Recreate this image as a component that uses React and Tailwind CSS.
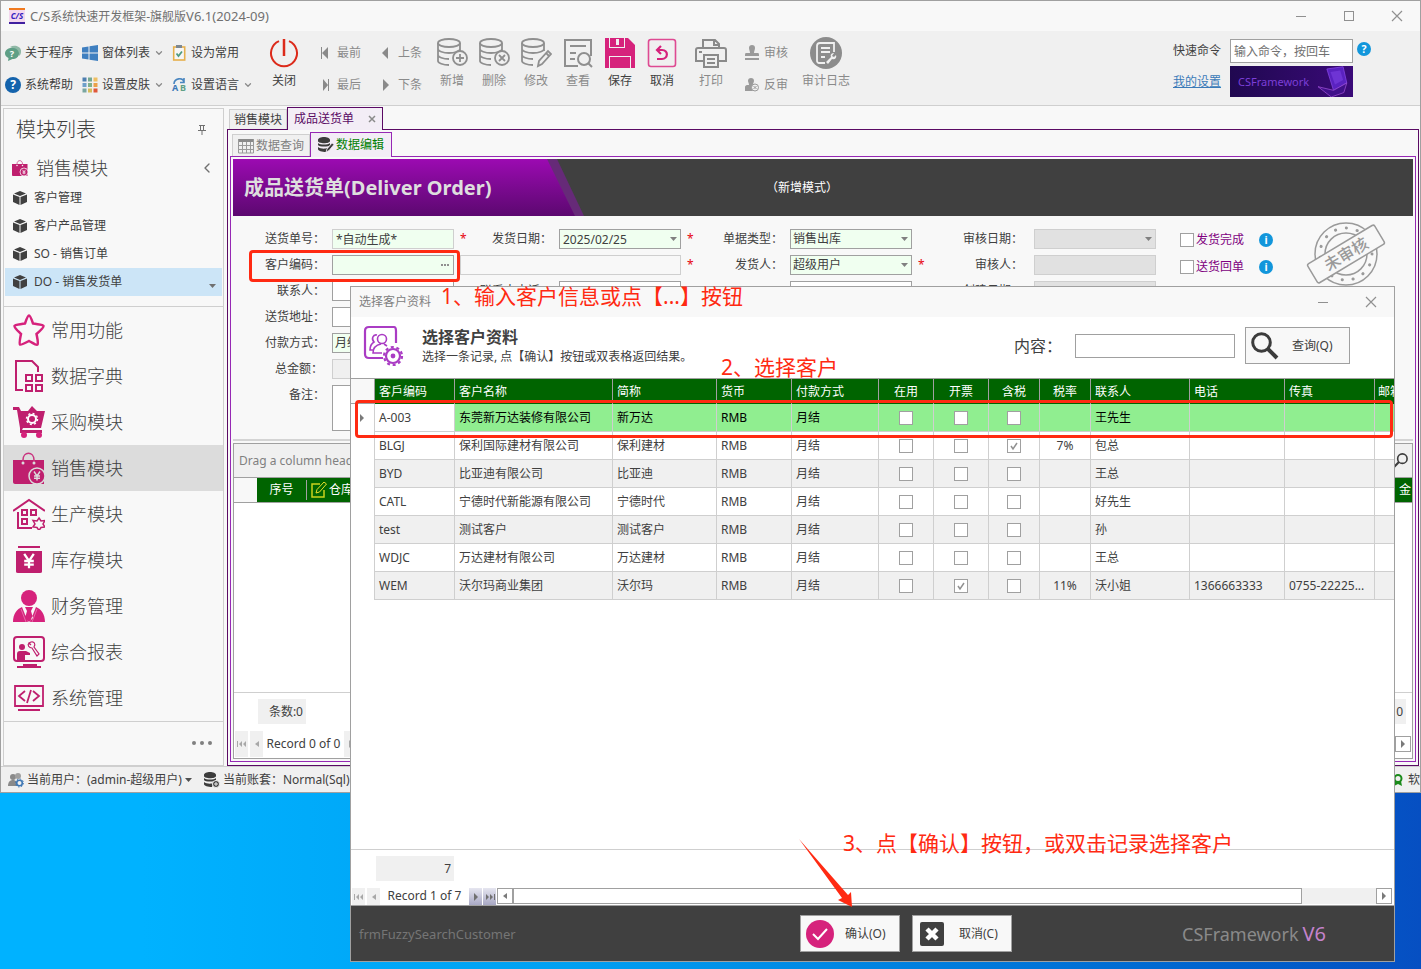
import React, { useState } from 'react';
import { ChevronDown, ChevronLeft } from 'lucide-react';

const NAV_ITEMS = ['常用功能', '数据字典', '采购模块', '销售模块', '生产模块', '库存模块', '财务管理', '综合报表', '系统管理'];

const CUSTOMERS = [
  { code: 'A-003', name: '东莞新万达装修有限公司', short: '新万达', flags: [false, false, false], rate: '', contact: '王先生', tel: '', fax: '' },
  { code: 'BLGJ', name: '保利国际建材有限公司', short: '保利建材', flags: [false, false, true], rate: '7%', contact: '包总', tel: '', fax: '' },
  { code: 'BYD', name: '比亚迪有限公司', short: '比亚迪', flags: [false, false, false], rate: '', contact: '王总', tel: '', fax: '' },
  { code: 'CATL', name: '宁德时代新能源有限公司', short: '宁德时代', flags: [false, false, false], rate: '', contact: '好先生', tel: '', fax: '' },
  { code: 'test', name: '测试客户', short: '测试客户', flags: [false, false, false], rate: '', contact: '孙', tel: '', fax: '' },
  { code: 'WDJC', name: '万达建材有限公司', short: '万达建材', flags: [false, false, false], rate: '', contact: '王总', tel: '', fax: '' },
  { code: 'WEM', name: '沃尔玛商业集团', short: '沃尔玛', flags: [false, true, false], rate: '11%', contact: '沃小姐', tel: '1366663333', fax: '0755-22225...' },
];

const FLAG_NAMES = ['在用', '开票', '含税'];

/* ---------- icons ---------- */

const Svg = ({ size = 16, box = 32, className = '', children }) => (
  <svg width={size} height={size} viewBox={`0 0 ${box} ${box}`} fill="none" className={`shrink-0 ${className}`} aria-hidden="true">
    {children}
  </svg>
);

const Caret = ({ className = 'text-[#808080]' }) => (
  <svg width="7" height="4" viewBox="0 0 7 4" className={`shrink-0 ${className}`} aria-hidden="true">
    <path d="M0 0h7L3.500 4z" fill="currentColor" />
  </svg>
);

const Arrow = ({ kind, className = 'text-[#7a7a7a]' }) => (
  <svg width="10" height="10" viewBox="0 0 10 10" fill="currentColor" className={`shrink-0 ${className}`} aria-hidden="true">
    {kind === 'first' && <path d="M0 2h1v6H0zM5 2v6L2 5zM9 2v6L6 5z" />}
    {kind === 'prev' && <path d="M7 2v6L3 5z" />}
    {kind === 'next' && <path d="M3 1v8l4-4z" />}
    {kind === 'last' && <path d="M9 2h1v6H9zM5 2v6l3-3zM1 2v6l3-3z" />}
  </svg>
);

const StepIcon = ({ kind }) => (
  <Svg box={16} className="text-[#8a8a8a]">
    {kind === 'first' && <path fill="currentColor" d="M4 2h1v12H4zM11 2v12L5 8z" />}
    {kind === 'last' && <path fill="currentColor" d="M11 2h1v12h-1zM6 2v12l5-6z" />}
    {kind === 'prev' && <path fill="currentColor" d="M10 2v12L4 8z" />}
    {kind === 'next' && <path fill="currentColor" d="M5 2v12l6-6z" />}
  </Svg>
);

const ChatHelp = () => (
  <Svg box={16}>
    <path d="M5 2C10-1 17 2 16 7c0 2-1 3-2 4l-1-5z" fill="#8fb8a6" />
    <path d="M7 3c4 0 7 2 7 5.500S11 14 7.500 14L3 16l.5-3C1 12 0 10 0 8.500 0 5 3 3 7 3z" fill="#5f9f86" />
    <text x="7" y="12" textAnchor="middle" fontSize="9" fontWeight="700" fill="#fff">?</text>
  </Svg>
);

const HelpDot = ({ size = 16, color = '#1463ac', mark = '?' }) => (
  <Svg box={16} size={size}>
    <circle cx="8" cy="8" r="8" fill={color} />
    <text x="8" y="12" textAnchor="middle" fontSize="12" fontWeight="700" fill="#fff">{mark}</text>
  </Svg>
);

const WindowsIcon = () => (
  <Svg box={16}>
    <path fill="#3f7fc0" d="M0 2.500 6.500 1.500V7.500H0zM7.500 1.300 16 0v7.500H7.500zM0 8.500h6.500v6L0 13.500zM7.500 8.500H16V16l-8.500-1.300z" />
  </Svg>
);

const SkinIcon = () => (
  <Svg box={16}>
    {['#4e7fb0', '#74a892', '#efbf63', '#6f9fc9', '#7fb08c', '#eba24a', '#7aa6a0', '#d8bd5a', '#e0583a'].map((c, i) => (
      <rect key={c} x={(i % 3) * 5.5 + 0.5} y={Math.floor(i / 3) * 5.5 + 0.5} width="4" height="4" fill={c} />
    ))}
  </Svg>
);

const ClipIcon = () => (
  <Svg box={16}>
    <rect x="2.700" y="2" width="11" height="13" fill="#f6f6f6" stroke="#e6b04c" strokeWidth="1.600" />
    <path d="M5 0h6v3H5z" fill="#7d8790" />
    <path d="M5.500 8.500 7.500 11 11 6.500" stroke="#4f9a80" strokeWidth="1.800" />
  </Svg>
);

const LanguageIcon = () => (
  <Svg box={16} className="overflow-visible">
    <path d="M3 7c0-6 9-7 10-2M13 1v4.500H9" stroke="#4a86c0" strokeWidth="1.600" />
    <text x="4" y="14" textAnchor="middle" fontSize="9" fontWeight="700" fill="#3a78b8">A</text>
    <text x="12" y="14" textAnchor="middle" fontSize="9" fontWeight="700" fill="#5f9f86">B</text>
  </Svg>
);

const PowerIcon = () => (
  <Svg size={32} box={32}>
    <path d="M11 4.200A13 13 0 1 0 21 4.200" stroke="#dc2a1a" strokeWidth="2" />
    <path d="M16 2v17" stroke="#dc2a1a" strokeWidth="2.500" />
  </Svg>
);

const DbIcon = ({ kind }) => (
  <Svg size={32} box={32} className="text-[#8f8f8f]">
    <g stroke="currentColor" strokeWidth="1.800">
      <ellipse cx="13" cy="6" rx="11" ry="4" />
      <path d="M2 6v18c0 2 5 4 11 4M24 6v8M2 12c0 2 5 4 11 4s11-2 11-4M2 18c0 2 5 4 11 4" />
      {kind !== 'edit' && <circle cx="24" cy="21" r="7" fill="#f0f0f0" />}
      {kind === 'add' && <path d="M24 17v8M20 21h8" />}
      {kind === 'remove' && <path d="m21 18 6 6M27 18l-6 6" />}
      {kind === 'edit' && <path fill="#f0f0f0" d="m18 29 1-5 9-10 3 3-9 10zM26 16l3 3" />}
    </g>
  </Svg>
);

const ViewIcon = () => (
  <Svg size={32} box={32}>
    <g stroke="#8f8f8f" strokeWidth="2">
      <path d="M16 29H3V3h26v16M8 9h16M8 16h6M8 22h5" />
      <circle cx="22" cy="22" r="6" />
      <path d="m26 26 4 4" />
    </g>
  </Svg>
);

const SaveIcon = () => (
  <Svg size={32} box={32}>
    <path fill="#d6227c" d="M1 1h23l7 7v23H1z" />
    <path fill="#f0f0f0" d="M5 1h1v9h14V1h1v10H5zM12 2h3v6h-3zM5 19h22v12h-1V20H6v11H5z" />
  </Svg>
);

const UndoIcon = () => (
  <Svg size={32} box={32}>
    <rect x="2.500" y="2.500" width="27" height="27" rx="2.500" stroke="#de4a92" strokeWidth="1.600" />
    <path d="m15 9-4 4 4 4M11 13h5c7 0 6 9 0 9h-5" stroke="#d6227c" strokeWidth="2.200" />
  </Svg>
);

const PrintIcon = () => (
  <Svg size={32} box={32}>
    <g stroke="#8a8a8a" strokeWidth="2">
      <path d="M8 24H1V13c0-1 1-2 2-2h26c1 0 2 1 2 2v11h-7M8 11V3h12l4 4v4M19 3v5h5M9 18h14v12H9zM12 22h8M12 26h8" />
      <path d="M4 15h3" />
    </g>
  </Svg>
);

const StampIcon = ({ reverse }) => (
  <Svg box={16}>
    {!reverse && (
      <path fill="#9a9a9a" d="M8 0a3 3 0 0 1 3 3c0 2-1 3-1 5h4c1 0 1 1 1 3H1c0-2 0-3 1-3h4c0-2-1-3-1-5a3 3 0 0 1 3-3zM1 13h14v2H1z" />
    )}
    {reverse && (
      <>
        <path fill="#9a9a9a" d="M7 1a3 3 0 0 1 3 3c0 1-1 2-1 4h3v6H1v-4c0-1 1-2 2-2h2c0-2-1-3-1-4a3 3 0 0 1 3-3z" />
        <circle cx="11" cy="10.500" r="3.500" fill="#f0f0f0" stroke="#9a9a9a" />
        <path d="m9.500 9 3 3m0-3-3 3" stroke="#9a9a9a" />
      </>
    )}
  </Svg>
);

const AuditLogIcon = () => (
  <Svg size={32} box={32}>
    <circle cx="16" cy="16" r="16" fill="#8c8c8c" />
    <path d="M15 26H9c-1 0-2-1-2-2V9c0-2 1-3 3-3h14v9M11 11h9M11 15h9M11 20h4" stroke="#f0f0f0" strokeWidth="1.800" />
    <path d="m16 25 5-5c-1-3 1-4 3-4l-2 3 2 1 2-2c1 3-1 5-4 4l-4 5z" fill="#f0f0f0" />
  </Svg>
);

const CubeIcon = () => (
  <Svg size={14} box={14}>
    <path fill="#404040" d="M7 0l6 2.500L7 5 1 2.500zM0 3.500 6.500 6v8L0 11zM14 3.500 7.500 6v8l6.500-3z" />
  </Svg>
);

const PinIcon = () => (
  <Svg size={10} box={10}>
    <path d="M2 .5h6M3.500 1v4M6.500 1v4M1 5.500h8M5 6v4" stroke="#707070" />
  </Svg>
);

const Yen = ({ x, y, s = 1, color = '#fff' }) => (
  <path transform={`translate(${x} ${y}) scale(${s})`} d="m-4-6 4 6 4-6M0 0v6M-4 0h8M-4 3h8" stroke={color} strokeWidth="1.900" />
);

const BagIcon = ({ size = 32, halo }) => (
  <Svg size={size} box={32}>
    <path fill="#bf1f6e" d="M0 8h31v24H2c-1 0-2-1-2-2z" />
    <path d="M10 11V8c0-9 11-9 11 0v3" stroke="#c9347f" strokeWidth="1.500" />
    <circle cx="10" cy="11" r="1.500" fill={halo} />
    <circle cx="21" cy="11" r="1.500" fill={halo} />
    <circle cx="24" cy="24" r="8" fill="#bf1f6e" stroke={halo} strokeWidth="1.500" />
    <Yen x={24} y={24} s={0.75} color={halo} />
  </Svg>
);

const NavIcon = ({ index }) => {
  if (index === 3) return <BagIcon halo="#dcdcdc" />;
  return (
    <Svg size={32} box={32}>
      {index === 0 && (
        <path d="M16 1.500c1 0 2 2 4 8 5 1 10 1 10.500 2.500S27 17 23.500 20c1 5 2 9 1 10.500S20 29 16 27c-4 2-8 4.500-9 3.500s0-5.500 1-10.500C5 17 1 13.500 1.500 12S7 10.500 12 9.500c2-6 3-8 4-8z" stroke="#d6227c" strokeWidth="2.500" />
      )}
      {index === 1 && (
        <g stroke="#bf1f6e" strokeWidth="2">
          <path d="M10 30H3V1h16l6 6v5" />
          <path d="M13 15h6v6h-6zM23 15h6v6h-6zM13 25h6v6h-6zM23 25h6v6h-6z" />
        </g>
      )}
      {index === 2 && (
        <>
          <path fill="#bf1f6e" d="M0 1h6l2 4h7l4-5 5 5h8l-4 17H10l-1 2h20v3H7V22L4 4H0z" />
          <circle cx="11" cy="29" r="3" fill="#d6227c" />
          <circle cx="26" cy="29" r="3" fill="#d6227c" />
          <circle cx="19" cy="13" r="4" stroke="#fff" strokeWidth="2" />
          <circle cx="19" cy="13" r="5.500" stroke="#fff" strokeWidth="1.500" strokeDasharray="2 2.300" />
        </>
      )}
      {index === 4 && (
        <g stroke="#bf1f6e" strokeWidth="2">
          <path d="M0 13 16 2l16 11M5 14v16h14" />
          <path d="M9 12h5v5H9zM18 12h5v5h-5zM9 21h5v5H9z" />
          <path d="m26 20 2 3 4-.5-2 3.500 2 3-4 .5-2 3-2-3-4-.5 2-3-2-3.500 4 .5z" strokeWidth="1.500" />
        </g>
      )}
      {index === 5 && (
        <>
          <path fill="#bf1f6e" d="M5 2h22v2H5zM3 7h26v20c0 1 0 2-2 2H5c-2 0-2-1-2-2z" />
          <Yen x={16} y={17} s={1.2} />
        </>
      )}
      {index === 6 && (
        <>
          <circle cx="16" cy="8" r="8" fill="#d6227c" />
          <path fill="#d6227c" d="M0 32c0-8 4-13 9-15l6 15zM32 32c0-8-4-13-9-15l-6 15zM12 17h8l-2 4 2 7-4 4-4-4 2-7z" />
          <path d="m8 19 5 13M24 19l-5 13" stroke="#eda0c8" strokeWidth=".6" />
        </>
      )}
      {index === 7 && (
        <>
          <rect x="1" y="1" width="30" height="24" rx="3" stroke="#bf1f6e" strokeWidth="2" />
          <path fill="#bf1f6e" d="M10 28h14v2h4v2H4v-2h6z" />
          <circle cx="9" cy="11" r="3" fill="#bf1f6e" />
          <path fill="#bf1f6e" d="M4 24v-6c0-2 1-3 3-3h6l4 2v2h-5v5z" />
          <path d="m16 7 2-1c3-1 5 2 3 5l5 7-2 2-5-8c-3 0-5-3-3-5l2 2z" stroke="#bf1f6e" strokeWidth="1.200" />
        </>
      )}
      {index === 8 && (
        <g stroke="#bf1f6e" strokeWidth="1.800">
          <path d="M2 4h28v20H2z" />
          <path d="m12 9-6 5 6 5M20 9l6 5-6 5M18 8l-4 13M5 28h22" />
        </g>
      )}
    </Svg>
  );
};

const UserGearIcon = () => (
  <Svg box={16}>
    <circle cx="5" cy="5" r="3" fill="#8a8a8a" />
    <circle cx="10" cy="4" r="3" fill="#a0a0a0" />
    <path d="M0 14c0-4 2-6 5-6s4 2 4 6z" fill="#8a8a8a" />
    <circle cx="11.500" cy="11" r="2.800" fill="#f0f0f0" stroke="#3f78b5" strokeWidth="1.600" />
    <circle cx="11.500" cy="11" r="4" stroke="#3f78b5" strokeDasharray="1.500 1.600" />
  </Svg>
);

const DbSolidIcon = ({ mark }) => (
  <Svg box={16}>
    <path fill="#3c3c3c" d="M0 3c0-4 12-4 12 0v1c0 3-12 3-12 0zM0 6c2 2 10 2 12 0v2c-1 2-11 2-12 0zM0 10c2 2 8 2 9 1l-1 4c-4 0-8-1-8-3z" />
    {mark === 'add' && <circle cx="12" cy="12" r="3.500" fill="#3c3c3c" stroke="#f0f0f0" />}
    {mark === 'add' && <path d="M12 10v4M10 12h4" stroke="#f0f0f0" />}
    {mark === 'edit' && <path d="m8 15 1-3 5-6 2 1.500-5 6z" fill="#3c3c3c" stroke="#f3edf6" strokeWidth=".7" />}
  </Svg>
);

const GridIcon = () => (
  <Svg box={16}>
    <path d="M0 1h16v3H0z" fill="#8a8a8a" />
    <path d="M.5 1v14h15V1M.5 7.500h15M.5 11.500h15M4.500 4v11M8.500 4v11M12.500 4v11" stroke="#9a9a9a" />
  </Svg>
);

const EditIcon = () => (
  <Svg box={16}>
    <path d="M9 2H1v13h12V8" stroke="#c9d21c" strokeWidth="1.500" />
    <path d="m5 11 1-3.500L13 0l2.500 2L8.500 10z" stroke="#e6e02a" />
  </Svg>
);

const SearchIcon = ({ size = 28, className = '' }) => (
  <Svg size={size} box={28} className={className}>
    <circle cx="10.500" cy="10.500" r="8.800" stroke="#3c3c3c" strokeWidth="3" />
    <path d="m17 17 9 9" stroke="#3c3c3c" strokeWidth="4" />
  </Svg>
);

const CustomerIcon = () => (
  <Svg size={42} box={42}>
    <g stroke="#aa3cc4" strokeWidth="2.200">
      <path d="M20 33H6c-3 0-4-2-4-4V6c0-3 2-4 4-4h25c2 0 2 2 2 4v12" />
      <circle cx="19" cy="14" r="4.500" strokeWidth="1.600" />
      <path d="M14 10c-4-1-6 4-3 7-3 2-4 5-4 8h4M18 19c-5 1-8 4-8 9h9M21 19l3 2" strokeWidth="1.600" />
      <circle cx="30" cy="31" r="7" />
      <circle cx="30" cy="31" r="9" strokeDasharray="3 2.700" />
    </g>
    <circle cx="30" cy="31" r="2.400" fill="#aa3cc4" />
  </Svg>
);

const AuditStamp = () => (
  <svg width="82" height="66" viewBox="0 0 82 66" fill="none" className="shrink-0" aria-label="未审核">
    <g stroke="#9a9a9a">
      <circle cx="41" cy="33" r="31" strokeWidth="1.500" />
      <circle cx="41" cy="33" r="21" strokeWidth="1.500" />
      <circle cx="41" cy="33" r="26" strokeWidth="3" strokeDasharray="0.100 11" strokeLinecap="round" />
    </g>
    <g transform="rotate(-31 41 33)">
      <rect x="2" y="22" width="78" height="22" rx="2" fill="#f8f8f8" stroke="#9a9a9a" strokeWidth="1.500" />
      <text x="41" y="39" textAnchor="middle" fontSize="16" fontWeight="500" fill="#9a9a9a">未审核</text>
    </g>
  </svg>
);

/* ---------- shared controls ---------- */

const ToolButton = ({ icon, label, muted, menu, className = '' }) => (
  <button className={`flex h-8 items-center gap-1 whitespace-nowrap ${muted ? 'text-[#8a8a8a]' : 'text-[#404040]'} ${className}`}>
    {icon}
    <span>{label}</span>
    {menu && <ChevronDown size={10} strokeWidth={3} className="text-[#8a8a8a]" />}
  </button>
);

const BigButton = ({ icon, label, muted, className = 'w-[42px]' }) => (
  <button className={`flex flex-col items-center ${muted ? 'text-[#8a8a8a]' : 'text-[#404040]'} ${className}`}>
    {icon}
    <span className="h-6 whitespace-nowrap leading-6">{label}</span>
  </button>
);

const Checkbox = ({ id, label, defaultChecked = false }) => {
  const [checked, setChecked] = useState(defaultChecked);
  return (
    <span className="relative inline-flex">
      <input
        id={id}
        type="checkbox"
        aria-label={label}
        checked={checked}
        onChange={() => setChecked(!checked)}
        className="size-[14px] appearance-none border border-[#a0a0a0] bg-white"
      />
      {checked && (
        <svg width="14" height="14" viewBox="0 0 14 14" fill="none" className="pointer-events-none absolute inset-0" aria-hidden="true">
          <path d="m4 7 2 3 4-6" stroke="#909090" strokeWidth="1.500" />
        </svg>
      )}
    </span>
  );
};

const Label = ({ htmlFor, children, required, className = 'pr-[7px]' }) => (
  <div className={`flex items-center justify-between pl-[6px] ${className}`}>
    <span className="text-red-600">{required ? '*' : ''}</span>
    <label htmlFor={htmlFor} className="whitespace-nowrap">{children}</label>
  </div>
);

const Field = ({ id, value = '', tone = 'border-[#a0a0a0] bg-white', className = '' }) => (
  <input id={id} defaultValue={value} className={`h-5 w-full min-w-0 border px-[3px] outline-none ${tone} ${className}`} />
);

const Picker = ({ id, value, tone = 'border-[#a0a0a0] bg-[#f0fff0]' }) => (
  <div className="relative">
    <select id={id} className={`block h-5 w-full appearance-none border px-[2px] outline-none ${tone}`}>
      <option>{value}</option>
    </select>
    <Caret className="pointer-events-none absolute top-2 right-1 text-[#808080]" />
  </div>
);

const NavButton = ({ kind, label, active, className = 'h-[17px]' }) => (
  <button
    aria-label={label}
    className={`flex w-[13px] items-center justify-center ${className} ${active ? 'bg-linear-to-b from-[#e6e6f0] to-[#a8a8c4]' : 'bg-[#f0f0f0]'}`}
  >
    <Arrow kind={kind} className={active ? 'text-[#707070]' : 'text-[#a8a8a8]'} />
  </button>
);

/* ---------- main window ---------- */

const WindowButtons = ({ maximize }) => (
  <div className="ml-auto flex items-center gap-[34px]">
    <button aria-label="最小化" className="px-[2px] py-1"><span className="block h-px w-[10px] bg-[#909090]" /></button>
    {maximize && <button aria-label="最大化" className="px-[2px]"><span className="block size-[10px] border border-[#909090]" /></button>}
    <button aria-label="关闭窗口" className="px-px">
      <Svg size={12} box={12}><path d="m1 1 10 10M11 1 1 11" stroke="#909090" strokeWidth="1.200" /></Svg>
    </button>
  </div>
);

const TitleBar = () => (
  <header className="flex h-[31px] shrink-0 items-center border-t border-[#a0a0a0] bg-[#f8f8f8] pr-4 pl-2 text-[#707070]">
    <span className="flex size-4 items-center justify-center border-y-2 border-t-[#f07a20] border-b-[#4020a0] bg-[#f3d8ee] text-[8px] font-bold text-[#3020c0] italic">C/S</span>
    <h1 className="ml-[5px] whitespace-nowrap">
      <span className="text-[13px]">C/S</span>系统快速开发框架-旗舰版<span className="text-[13px]">V6.1(2024-09)</span>
    </h1>
    <WindowButtons maximize />
  </header>
);

const Toolbar = () => (
  <div className="flex h-[75px] shrink-0 items-start border-b border-[#cfcfcf] bg-[#f0f0f0] pt-[6px] pl-1">
    <div className="w-[77px] shrink-0">
      <ToolButton icon={<ChatHelp />} label="关于程序" />
      <ToolButton icon={<HelpDot />} label="系统帮助" />
    </div>
    <div className="w-[89px] shrink-0">
      <ToolButton icon={<WindowsIcon />} label="窗体列表" menu />
      <ToolButton icon={<SkinIcon />} label="设置皮肤" menu />
    </div>
    <div className="w-[95px] shrink-0">
      <ToolButton icon={<ClipIcon />} label="设为常用" />
      <ToolButton icon={<LanguageIcon />} label="设置语言" menu />
    </div>
    <BigButton icon={<PowerIcon />} label="关闭" className="w-9" />
    <div className="ml-[15px] w-[61px] shrink-0">
      <ToolButton icon={<StepIcon kind="first" />} label="最前" muted />
      <ToolButton icon={<StepIcon kind="last" />} label="最后" muted />
    </div>
    <div className="w-[53px] shrink-0">
      <ToolButton icon={<StepIcon kind="prev" />} label="上条" muted />
      <ToolButton icon={<StepIcon kind="next" />} label="下条" muted />
    </div>
    <BigButton icon={<DbIcon kind="add" />} label="新增" muted />
    <BigButton icon={<DbIcon kind="remove" />} label="删除" muted />
    <BigButton icon={<DbIcon kind="edit" />} label="修改" muted />
    <BigButton icon={<ViewIcon />} label="查看" muted />
    <BigButton icon={<SaveIcon />} label="保存" />
    <BigButton icon={<UndoIcon />} label="取消" />
    <BigButton icon={<PrintIcon />} label="打印" muted className="w-14" />
    <div className="ml-[5px] w-[52px] shrink-0">
      <ToolButton icon={<StampIcon />} label="审核" muted />
      <ToolButton icon={<StampIcon reverse />} label="反审" muted />
    </div>
    <BigButton icon={<AuditLogIcon />} label="审计日志" muted className="w-[60px]" />

    <div className="mr-[49px] ml-auto flex items-start pt-[2px]">
      <div className="grid grid-cols-[57px_123px] items-center gap-y-[3px]">
        <label htmlFor="command" className="text-[#404040]">快速命令</label>
        <input id="command" placeholder="输入命令，按回车" className="h-6 min-w-0 border border-[#a0a0a0] bg-white px-[3px] outline-none placeholder:text-[#707070]" />
        <a href="#settings" className="text-[#3a7ab8] underline">我的设置</a>
        <a href="#framework" className="flex h-[31px] items-center justify-between bg-linear-to-r from-[#200850] to-[#3a0a78] pl-2 text-[11px] text-[#7c3fd8]">
          CSFramework
          <Svg size={31} box={42} className="mr-1">
            <path d="m12 4 22-3 5 22-18 10z" fill="#5a22c0" stroke="#8a48e8" />
            <path d="m0 28 21 5 18-10-4 13-17 6z" fill="#40108a" stroke="#a050d8" />
            <path d="m17 8 13-2 4 13-11 6z" fill="#6e34d4" />
          </Svg>
        </a>
      </div>
      <button aria-label="帮助" className="ml-1 pt-[3px]"><HelpDot size={14} color="#1296db" /></button>
    </div>
  </div>
);

const Sidebar = () => {
  const [active, setActive] = useState(3);
  return (
    <aside className="mt-[2px] ml-[2px] flex w-[221px] shrink-0 flex-col border border-[#cfcfcf] bg-[#f8f8f8] text-[#404040]">
      <div className="flex h-[42px] items-center justify-between pr-4 pl-3">
        <h2 className="text-xl font-light">模块列表</h2>
        <PinIcon />
      </div>
      <div className="flex h-[33px] items-center pr-2 pl-2">
        <BagIcon size={16} halo="#f8f8f8" />
        <h3 className="ml-2 text-lg font-light">销售模块</h3>
        <ChevronLeft size={16} className="ml-auto text-[#707070]" />
      </div>
      <ul>
        {['客户管理', '客户产品管理', 'SO - 销售订单', 'DO - 销售发货单'].map((item, i) => (
          <li key={item} className="px-px">
            <a href="#module" className={`flex h-7 items-center gap-[7px] pr-[6px] pl-2 ${i === 3 ? 'bg-[#cce5f7]' : ''}`}>
              <CubeIcon />
              <span>{item}</span>
              {i === 3 && <Caret className="mt-2 ml-auto text-[#707070]" />}
            </a>
          </li>
        ))}
      </ul>
      <nav className="mt-[10px] border-y border-[#cfcfcf]">
        {NAV_ITEMS.map((item, i) => (
          <button
            key={item}
            onClick={() => setActive(i)}
            className={`flex h-[46px] w-full items-center gap-[6px] pl-[9px] text-lg font-light ${i === active ? 'bg-[#dcdcdc]' : ''}`}
          >
            <NavIcon index={i} />
            {item}
          </button>
        ))}
      </nav>
      <button aria-label="更多" className="mt-[19px] mr-[11px] flex gap-1 self-end">
        {[0, 1, 2].map((i) => <span key={i} className="size-1 rounded-full bg-[#808080]" />)}
      </button>
    </aside>
  );
};

const OrderForm = () => (
  <section className="flex shrink-0 items-start pt-[13px] pb-2 text-[#404040]">
    <div className="grid auto-rows-[20px] grid-cols-[99px_122px_105px_122px_109px_122px_122px_122px] gap-y-[6px]">
      <Label htmlFor="orderNo">送货单号：</Label>
      <Field id="orderNo" value="*自动生成*" tone="border-[#cfcfcf] bg-[#f0fff0]" />
      <Label htmlFor="sendDate" required>发货日期：</Label>
      <div className="relative">
        <Field id="sendDate" value="2025/02/25" tone="border-[#a0a0a0] bg-[#f0fff0]" />
        <Caret className="pointer-events-none absolute top-2 right-1 text-[#808080]" />
      </div>
      <Label htmlFor="orderType" required>单据类型：</Label>
      <Picker id="orderType" value="销售出库" />
      <Label htmlFor="auditDate" className="pr-[11px]">审核日期：</Label>
      <Picker id="auditDate" value="" tone="border-[#cfcfcf] bg-[#e1e1e1]" />

      <Label htmlFor="customerCode">客户编码：</Label>
      <div className="flex border border-[#a0a0a0] bg-[#f0fff0]">
        <input id="customerCode" className="min-w-0 flex-1 bg-transparent px-1 outline-none" />
        <button aria-label="选择客户" className="flex items-center gap-px pr-1">
          {[0, 1, 2].map((i) => <span key={i} className="size-[2px] bg-[#909090]" />)}
        </button>
      </div>
      <div className="col-span-2 pl-[6px]">
        <input aria-label="客户名称" className="block h-5 w-full border border-[#cfcfcf] bg-[#f8f8f8] outline-none" />
      </div>
      <Label htmlFor="sender" required>发货人：</Label>
      <Picker id="sender" value="超级用户" />
      <Label htmlFor="auditor" required className="pr-[11px]">审核人：</Label>
      <Field id="auditor" tone="border-[#cfcfcf] bg-[#e1e1e1]" />

      <Label htmlFor="contact">联系人：</Label>
      <Field id="contact" />
      <Label htmlFor="contactTel">联系人电话：</Label>
      <Field id="contactTel" />
      <div />
      <Field id="remark2" />
      <Label htmlFor="createDate" className="pr-[11px]">创建日期：</Label>
      <Field id="createDate" tone="border-[#cfcfcf] bg-[#e1e1e1]" />

      <Label htmlFor="address">送货地址：</Label>
      <div className="col-span-7"><Field id="address" /></div>
      <Label htmlFor="payType">付款方式：</Label>
      <div className="col-span-7 w-[122px]"><Picker id="payType" value="月结" /></div>
      <Label htmlFor="total" className="pr-[9px]">总金额：</Label>
      <div className="col-span-7 w-[122px]"><Field id="total" tone="border-[#cfcfcf] bg-[#f0f0f0]" /></div>
      <Label htmlFor="remark">备注：</Label>
      <div className="col-span-7 row-span-2">
        <textarea id="remark" className="block h-full w-full resize-none border border-[#a0a0a0] bg-white outline-none" />
      </div>
    </div>

    <div className="ml-6 flex shrink-0 flex-col gap-[7px] pt-px text-[#800080]">
      {['发货完成', '送货回单'].map((text, i) => (
        <div key={text} className="flex h-5 items-center">
          <Checkbox id={`done${i}`} />
          <label htmlFor={`done${i}`} className="ml-[2px] w-[63px]">{text}</label>
          <HelpDot size={14} color="#1296db" mark="i" />
        </div>
      ))}
    </div>
    <div className="-mt-2 ml-8"><AuditStamp /></div>
  </section>
);

const DetailGrid = () => (
  <section className="flex min-h-0 flex-1 flex-col border border-[#a0a0a0] bg-white">
    <div className="flex h-[33px] shrink-0 items-center justify-between bg-[#f0f0f0] pr-1 pl-[5px] text-[#808080]">
      <span>Drag a column header here</span>
      <SearchIcon size={15} className="-scale-x-100" />
    </div>
    <div className="flex h-[26px] shrink-0 items-stretch border-y border-[#a0a0a0]">
      <span className="w-[23px] bg-[#f8f8f8]" />
      <div className="flex flex-1 items-center bg-[#006400] text-white">
        <span className="w-[49px] text-center">序号</span>
        <span className="h-5 w-px bg-[#a0a0a0]" />
        <span className="ml-1 flex items-center gap-[2px]"><EditIcon />仓库</span>
        <span className="ml-auto pr-px">金</span>
      </div>
    </div>
    <div className="flex-1" />
    <div className="flex h-[38px] shrink-0 items-center justify-between border-t border-[#cfcfcf] pr-[6px] pl-6 text-[#404040]">
      <span className="flex h-[25px] w-12 items-center justify-end bg-[#f0f0f0] pr-[3px]">条数:0</span>
      <span className="flex h-[25px] w-12 items-center justify-end bg-[#f0f0f0] pr-[3px]">0</span>
    </div>
    <div className="flex h-7 shrink-0 items-center px-px text-[#404040]">
      <NavButton kind="first" label="首条" className="h-[26px]" />
      <span className="w-[2px]" />
      <NavButton kind="prev" label="上一条" className="h-[26px]" />
      <span className="w-[81px] text-center">Record 0 of 0</span>
      <NavButton kind="next" label="下一条" className="h-[26px]" />
      <button aria-label="向右" className="ml-auto flex size-4 items-center justify-center border border-[#a0a0a0]"><Arrow kind="next" /></button>
    </div>
  </section>
);

const Workspace = () => (
  <main className="mt-px ml-[3px] flex min-w-0 flex-1 flex-col">
    <div role="tablist" className="flex h-[22px] shrink-0 items-end">
      <button role="tab" className="ml-[2px] h-5 w-[58px] border border-b-0 border-[#cfcfcf] bg-[#f0f0f0] text-[#404040]">销售模块</button>
      <button role="tab" aria-selected="true" className="relative -mb-px flex h-[23px] w-24 items-center justify-between border border-b-0 border-[#5a0a64] bg-[#f3edf6] px-[6px] text-[#5a0a64]">
        成品送货单
        <Svg size={8} box={8}><path d="m1 1 6 6M7 1 1 7" stroke="#8a8a8a" strokeWidth="1.500" /></Svg>
      </button>
    </div>
    <div className="mr-px flex min-h-0 flex-1 flex-col border border-[#5a0a64] px-[2px] pt-[2px] pb-[3px]">
      <div role="tablist" className="flex h-6 shrink-0 items-end">
        <button role="tab" className="ml-[2px] flex h-[22px] w-[78px] items-center gap-[2px] border border-b-0 border-[#cfcfcf] bg-[#f0f0f0] pl-[5px] whitespace-nowrap text-[#808080]">
          <GridIcon />数据查询
        </button>
        <button role="tab" aria-selected="true" className="relative -mb-px flex h-[25px] w-[82px] items-center gap-[2px] border border-b-0 border-[#9628b4] bg-[#f3edf6] pl-[7px] whitespace-nowrap text-[#008000]">
          <DbSolidIcon mark="edit" />数据编辑
        </button>
      </div>
      <div className="flex min-h-0 flex-1 flex-col border border-[#9628b4] p-[2px]">
        <div className="flex h-[57px] shrink-0 items-center bg-[#404040]">
          <div className="h-full w-[351px] bg-[#662a78] [clip-path:polygon(0_0,324px_0,100%_100%,0_100%)]">
            <div className="flex h-full w-[342px] items-center bg-linear-to-b from-[#9c0ab2] to-[#5c0870] pl-[11px] [clip-path:polygon(0_0,314px_0,100%_100%,0_100%)]">
              <h2 className="text-xl font-bold whitespace-nowrap text-[#dedede]">成品送货单(Deliver Order)</h2>
            </div>
          </div>
          <p className="ml-[182px] text-white">（新增模式）</p>
        </div>
        <OrderForm />
        <div className="mb-[2px] h-[2px] shrink-0 bg-[#d4d4d4]" />
        <DetailGrid />
      </div>
    </div>
  </main>
);

const StatusBar = () => (
  <footer className="flex h-[27px] shrink-0 items-center overflow-hidden border-t border-b border-t-[#cfcfcf] border-b-[#a0a0a0] bg-[#f0f0f0] pl-[7px] whitespace-nowrap text-[#404040]">
    <UserGearIcon />
    <button className="ml-[3px] flex items-center gap-[3px]">当前用户：(admin-超级用户)<Caret className="text-[#505050]" /></button>
    <span className="ml-3 flex items-center gap-[3px]"><DbSolidIcon mark="add" />当前账套：Normal(Sql)</span>
    <span className="ml-auto flex gap-1">
      <Svg size={12} box={12} className="mt-[2px]">
        <circle cx="6" cy="4.500" r="3.500" stroke="#1a8a1a" strokeWidth="2" />
        <path d="m3 7-1 5 4-2 4 2-1-5" fill="#1a8a1a" />
      </Svg>
      软
    </span>
  </footer>
);

/* ---------- customer dialog ---------- */

const CustomerTable = () => {
  const [selected, setSelected] = useState(0);
  const head = 'border-r border-[#a0a0a0] bg-[#006400] px-1 font-normal';
  return (
    <table className="w-full table-fixed border-separate border-spacing-0 whitespace-nowrap">
      <colgroup>
        <col className="w-6" />
        <col className="w-20" />
        <col className="w-[158px]" />
        <col className="w-[104px]" />
        <col className="w-[75px]" />
        <col className="w-[87px]" />
        <col className="w-[55px]" />
        <col className="w-[55px]" />
        <col className="w-[51px]" />
        <col className="w-[51px]" />
        <col className="w-[99px]" />
        <col className="w-[95px]" />
        <col className="w-[90px]" />
        <col />
      </colgroup>
      <thead>
        <tr className="h-[25px] text-left text-white">
          <th className="border-r border-b border-[#a0a0a0] bg-[#f8f8f8]" />
          {['客戶编码', '客户名称', '简称', '货币', '付款方式'].map((h) => <th key={h} className={head}>{h}</th>)}
          {[...FLAG_NAMES, '税率'].map((h) => <th key={h} className={`${head} text-center`}>{h}</th>)}
          {['联系人', '电话', '传真'].map((h) => <th key={h} className={head}>{h}</th>)}
          <th className="overflow-hidden bg-[#006400] pl-[3px] font-normal">邮箱</th>
        </tr>
      </thead>
      <tbody>
        {CUSTOMERS.map((c, i) => {
          const on = i === selected;
          const tone = on ? 'bg-[#90ee90] text-black' : i % 2 ? 'bg-white' : 'bg-[#f0f0f0]';
          const cell = `border-r border-b border-[#cfcfcf] px-1 ${tone}`;
          return (
            <tr key={c.code} onClick={() => setSelected(i)} className="h-7">
              <td className="border-r border-[#cfcfcf] bg-white pl-[6px]">{on && <Arrow kind="next" />}</td>
              <td className={`border-r border-b border-[#cfcfcf] px-1 ${on ? 'bg-white' : tone}`}>{c.code}</td>
              <td className={cell}>{c.name}</td>
              <td className={cell}>{c.short}</td>
              <td className={cell}>RMB</td>
              <td className={cell}>月结</td>
              {c.flags.map((flag, n) => (
                <td key={FLAG_NAMES[n]} className={`${cell} text-center`}>
                  <span className="flex justify-center"><Checkbox label={`${c.code} ${FLAG_NAMES[n]}`} defaultChecked={flag} /></span>
                </td>
              ))}
              <td className={`${cell} text-center`}>{c.rate}</td>
              <td className={cell}>{c.contact}</td>
              <td className={cell}>{c.tel}</td>
              <td className={cell}>{c.fax}</td>
              <td className={`border-b border-[#cfcfcf] ${tone}`} />
            </tr>
          );
        })}
      </tbody>
    </table>
  );
};

const CustomerDialog = () => (
  <div role="dialog" aria-label="选择客户资料" className="absolute top-[286px] right-[26px] bottom-[7px] left-[350px] flex flex-col border border-[#a0a0a0] bg-white text-[#404040]">
    <div className="flex h-[30px] shrink-0 items-center bg-[#f8f8f8] pr-4 pl-2 text-[#808080]">
      <span>选择客户资料</span>
      <WindowButtons />
    </div>
    <div className="flex h-[61px] shrink-0 items-center pr-11 pb-1 pl-3">
      <CustomerIcon />
      <div className="ml-[17px] pt-[2px]">
        <h2 className="text-base leading-5 font-bold">选择客户资料</h2>
        <p className="leading-5">选择一条记录, 点【确认】按钮或双表格返回结果。</p>
      </div>
      <label htmlFor="keyword" className="ml-auto w-[61px] text-base whitespace-nowrap">内容：</label>
      <input id="keyword" className="h-6 w-40 border border-[#a0a0a0] outline-none" />
      <button className="ml-[10px] flex h-[37px] w-[105px] items-center gap-[13px] border border-[#a0a0a0] bg-[#f8f8f8] pl-[5px] whitespace-nowrap">
        <SearchIcon />查询(Q)
      </button>
    </div>
    <div className="min-h-0 flex-1 overflow-hidden border-t border-[#a0a0a0]">
      <CustomerTable />
    </div>
    <div className="h-[39px] shrink-0 border-t border-[#cfcfcf] pt-[6px] pl-[25px]">
      <span className="flex h-[25px] w-[78px] items-center justify-end bg-[#f0f0f0] pr-[3px]">7</span>
    </div>
    <div className="flex h-[18px] shrink-0 border-b border-[#a0a0a0] pr-[2px] pl-px">
      <NavButton kind="first" label="首条" />
      <span className="w-[2px]" />
      <NavButton kind="prev" label="上一条" />
      <span className="w-[89px] text-center">Record 1 of 7</span>
      <NavButton kind="next" label="下一条" active />
      <span className="w-px" />
      <NavButton kind="last" label="末条" active />
      <div className="ml-px flex h-4 flex-1 bg-[#f0f0f0]">
        <button aria-label="向左" className="flex w-4 items-center justify-center border border-[#a0a0a0] bg-white"><Arrow kind="prev" /></button>
        <span className="mr-[74px] flex-1 border border-[#a0a0a0] bg-white" />
        <button aria-label="向右" className="flex w-4 items-center justify-center border border-[#a0a0a0] bg-white"><Arrow kind="next" /></button>
      </div>
    </div>
    <div className="flex h-[55px] shrink-0 items-center bg-[#404040] pl-2">
      <span className="w-[441px] text-[13px] text-[#757575]">frmFuzzySearchCustomer</span>
      <button className="flex h-[37px] w-[100px] items-center gap-[11px] border border-[#a0a0a0] bg-[#f8f8f8] pl-[5px] whitespace-nowrap">
        <Svg size={28} box={28}>
          <circle cx="14" cy="14" r="14" fill="#d6227c" />
          <path d="m7 14 5 5 9-10" stroke="#fff" strokeWidth="2" />
        </Svg>
        确认(O)
      </button>
      <button className="ml-3 flex h-[37px] w-[100px] items-center gap-[15px] border border-[#a0a0a0] bg-[#f8f8f8] pl-[7px] whitespace-nowrap">
        <Svg size={24} box={24}>
          <rect width="24" height="24" rx="2" fill="#404040" />
          <path d="m7 7 10 10M17 7 7 17" stroke="#fff" strokeWidth="4.500" />
        </Svg>
        取消(C)
      </button>
      <p className="mr-[68px] ml-auto text-lg text-[#8a8a8a]">CSFramework<span className="ml-1 text-xl text-[#c583cc]">V6</span></p>
    </div>
  </div>
);

/* ---------- tutorial marks over the windows ---------- */

const Guides = () => (
  <div className="pointer-events-none absolute inset-0 text-[21px] leading-7 whitespace-nowrap text-[#ff2a12]">
    <div className="absolute top-[250px] left-[249px] h-8 w-[211px] rounded border-3 border-[#ff2a12]" />
    <div className="absolute top-[400px] right-7 left-[355px] h-[38px] rounded border-3 border-[#ff2a12]" />
    <p className="absolute top-[282px] left-[441px]">1、输入客户信息或点【...】按钮</p>
    <p className="absolute top-[353px] left-[721px]">2、选择客户</p>
    <p className="absolute top-[829px] left-[843px]">3、点【确认】按钮，或双击记录选择客户</p>
    <svg width="56" height="68" viewBox="0 0 56 68" className="absolute top-[839px] left-[799px]" aria-hidden="true">
      <path d="M0 0 49 56l3-3 1 15-14-7 4-2z" fill="#ff2a12" />
    </svg>
  </div>
);

export default function App() {
  return (
    <div
      lang="zh-CN"
      className="relative flex h-screen w-full flex-col overflow-hidden bg-linear-to-r from-[#00b2ff] from-10% via-[#00a0f2] via-40% to-[#064fc2] pb-44 font-['Noto_Sans','Noto_Sans_CJK_SC',sans-serif] text-[12px] leading-4"
    >
      <div className="flex min-h-0 flex-1 flex-col border-x border-[#a0a0a0] bg-[#f8f8f8]">
        <TitleBar />
        <Toolbar />
        <div className="flex min-h-0 flex-1">
          <Sidebar />
          <Workspace />
        </div>
        <StatusBar />
      </div>
      <CustomerDialog />
      <Guides />
    </div>
  );
}
